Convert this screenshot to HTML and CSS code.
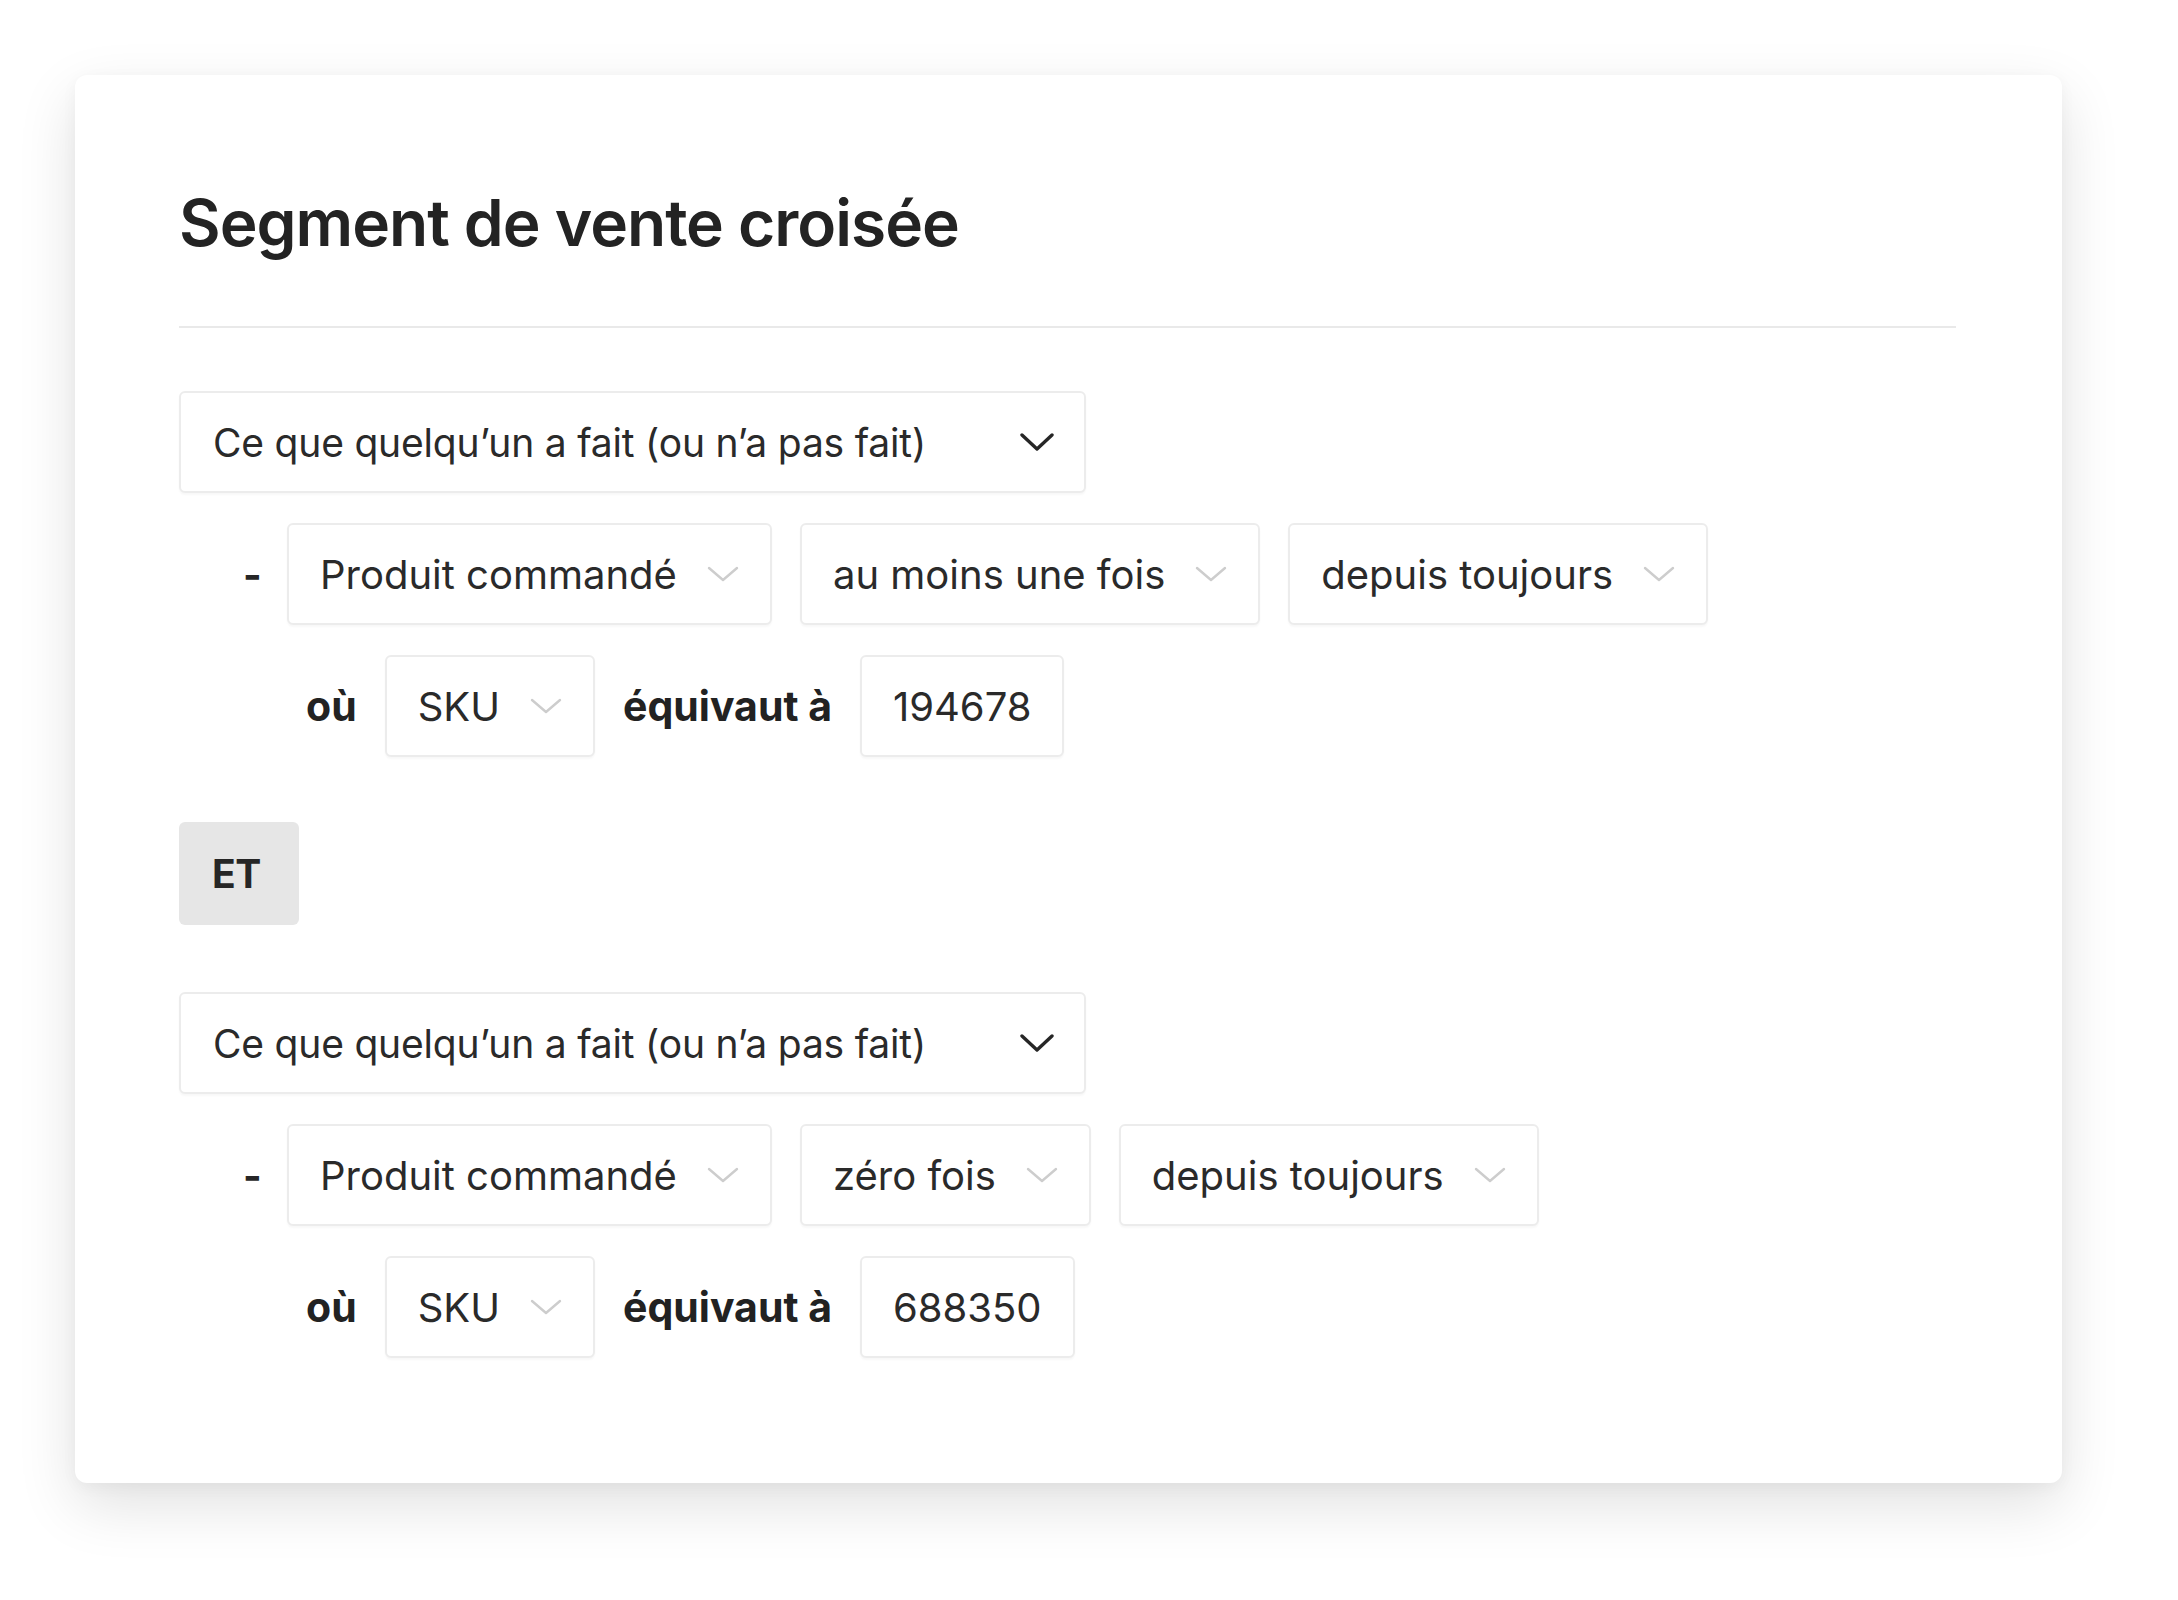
FILE: index.html
```html
<!DOCTYPE html>
<html lang="fr">
<head>
<meta charset="utf-8">
<title>Segment de vente croisée</title>
<link rel="stylesheet" href="styles.css">
</head>
<body>
<div class="page">
  <section class="card">
    <h1 class="title">Segment de vente croisée</h1>
    <hr class="divider">

    <div class="group">
      <div class="select select-main">
        <span>Ce que quelqu’un a fait (ou n’a pas fait)</span>
        <svg class="chev-main" viewBox="0 0 34 20" width="34" height="20"><path d="M2 3 L17 17 L32 3"/></svg>
      </div>
      <div class="row row-cond">
        <span class="dash">-</span>
        <div class="select"><span>Produit commandé</span><svg class="chev" viewBox="0 0 32 18" width="32" height="18"><path d="M2 3 L16 15 L30 3"/></svg></div>
        <div class="select"><span>au moins une fois</span><svg class="chev" viewBox="0 0 32 18" width="32" height="18"><path d="M2 3 L16 15 L30 3"/></svg></div>
        <div class="select"><span>depuis toujours</span><svg class="chev" viewBox="0 0 32 18" width="32" height="18"><path d="M2 3 L16 15 L30 3"/></svg></div>
      </div>
      <div class="row row-where">
        <span class="label">où</span>
        <div class="select"><span>SKU</span><svg class="chev" viewBox="0 0 32 18" width="32" height="18"><path d="M2 3 L16 15 L30 3"/></svg></div>
        <span class="label">équivaut à</span>
        <div class="input">194678</div>
      </div>
    </div>

    <div class="and">ET</div>

    <div class="group">
      <div class="select select-main">
        <span>Ce que quelqu’un a fait (ou n’a pas fait)</span>
        <svg class="chev-main" viewBox="0 0 34 20" width="34" height="20"><path d="M2 3 L17 17 L32 3"/></svg>
      </div>
      <div class="row row-cond">
        <span class="dash">-</span>
        <div class="select"><span>Produit commandé</span><svg class="chev" viewBox="0 0 32 18" width="32" height="18"><path d="M2 3 L16 15 L30 3"/></svg></div>
        <div class="select"><span>zéro fois</span><svg class="chev" viewBox="0 0 32 18" width="32" height="18"><path d="M2 3 L16 15 L30 3"/></svg></div>
        <div class="select"><span>depuis toujours</span><svg class="chev" viewBox="0 0 32 18" width="32" height="18"><path d="M2 3 L16 15 L30 3"/></svg></div>
      </div>
      <div class="row row-where">
        <span class="label">où</span>
        <div class="select"><span>SKU</span><svg class="chev" viewBox="0 0 32 18" width="32" height="18"><path d="M2 3 L16 15 L30 3"/></svg></div>
        <span class="label">équivaut à</span>
        <div class="input">688350</div>
      </div>
    </div>
  </section>
</div>
</body>
</html>
```
FILE: styles.css
```css
* { box-sizing: border-box; }
html, body { margin: 0; padding: 0; background: #ffffff; }
body {
  font-family: Inter, "Liberation Sans", Arial, sans-serif;
  color: #262626;
}
.page {
  padding: 75px 116px 117px 75px;
  min-height: 1600px;
}
.card {
  width: 1987px;
  min-height: 1408px;
  background: #fff;
  border-radius: 12px;
  box-shadow: 0 22px 60px rgba(0, 0, 0, 0.12), 0 4px 16px rgba(0, 0, 0, 0.04);
  padding: 108px 106px 125px 104px;
}
.title {
  margin: 0;
  font-size: 64px;
  line-height: 80px;
  font-weight: 600;
  letter-spacing: -1px;
  color: #232323;
}
.divider {
  margin: 63px 0 0 0;
  border: none;
  height: 2px;
  background: #e9e9e9;
}
.group {
  display: flex;
  flex-direction: column;
  gap: 30px;
  margin-top: 63px;
}
.and + .group { margin-top: 67px; }
.select, .input {
  height: 102px;
  display: inline-flex;
  align-items: center;
  border: 2px solid #ececec;
  border-radius: 6px;
  background: #fff;
  box-shadow: 0 2px 2px rgba(0, 0, 0, 0.03);
  font-size: 40px;
  letter-spacing: 0;
  color: #2a2a2a;
  padding: 0 31px 0 31px;
  gap: 30px;
  white-space: nowrap;
}
.select-main {
  width: 907px;
  justify-content: space-between;
  padding: 0 30px 0 32px;
  font-size: 39px;
  letter-spacing: -0.2px;
}
.chev-main { flex: none; }
.chev-main path {
  fill: none;
  stroke: #262626;
  stroke-width: 3.4;
  stroke-linecap: round;
  stroke-linejoin: round;
}
.chev { flex: none; }
.chev path {
  fill: none;
  stroke: #cdcdcd;
  stroke-width: 2.4;
  stroke-linecap: round;
  stroke-linejoin: round;
}
.row {
  display: flex;
  align-items: center;
}
.row-cond {
  padding-left: 64px;
  gap: 28px;
}
.dash {
  width: 16px;
  font-size: 40px;
  font-weight: 700;
  color: #262626;
}
.row-where {
  padding-left: 127px;
  gap: 28px;
}
.label {
  font-size: 41px;
  font-weight: 700;
  letter-spacing: 0;
  color: #222;
}
.and {
  margin-top: 65px;
  width: 120px;
  height: 103px;
  border-radius: 6px;
  background: #e6e6e6;
  display: flex;
  align-items: center;
  padding-left: 33px;
  font-size: 39px;
  font-weight: 700;
  letter-spacing: -0.5px;
  color: #262626;
}
```
